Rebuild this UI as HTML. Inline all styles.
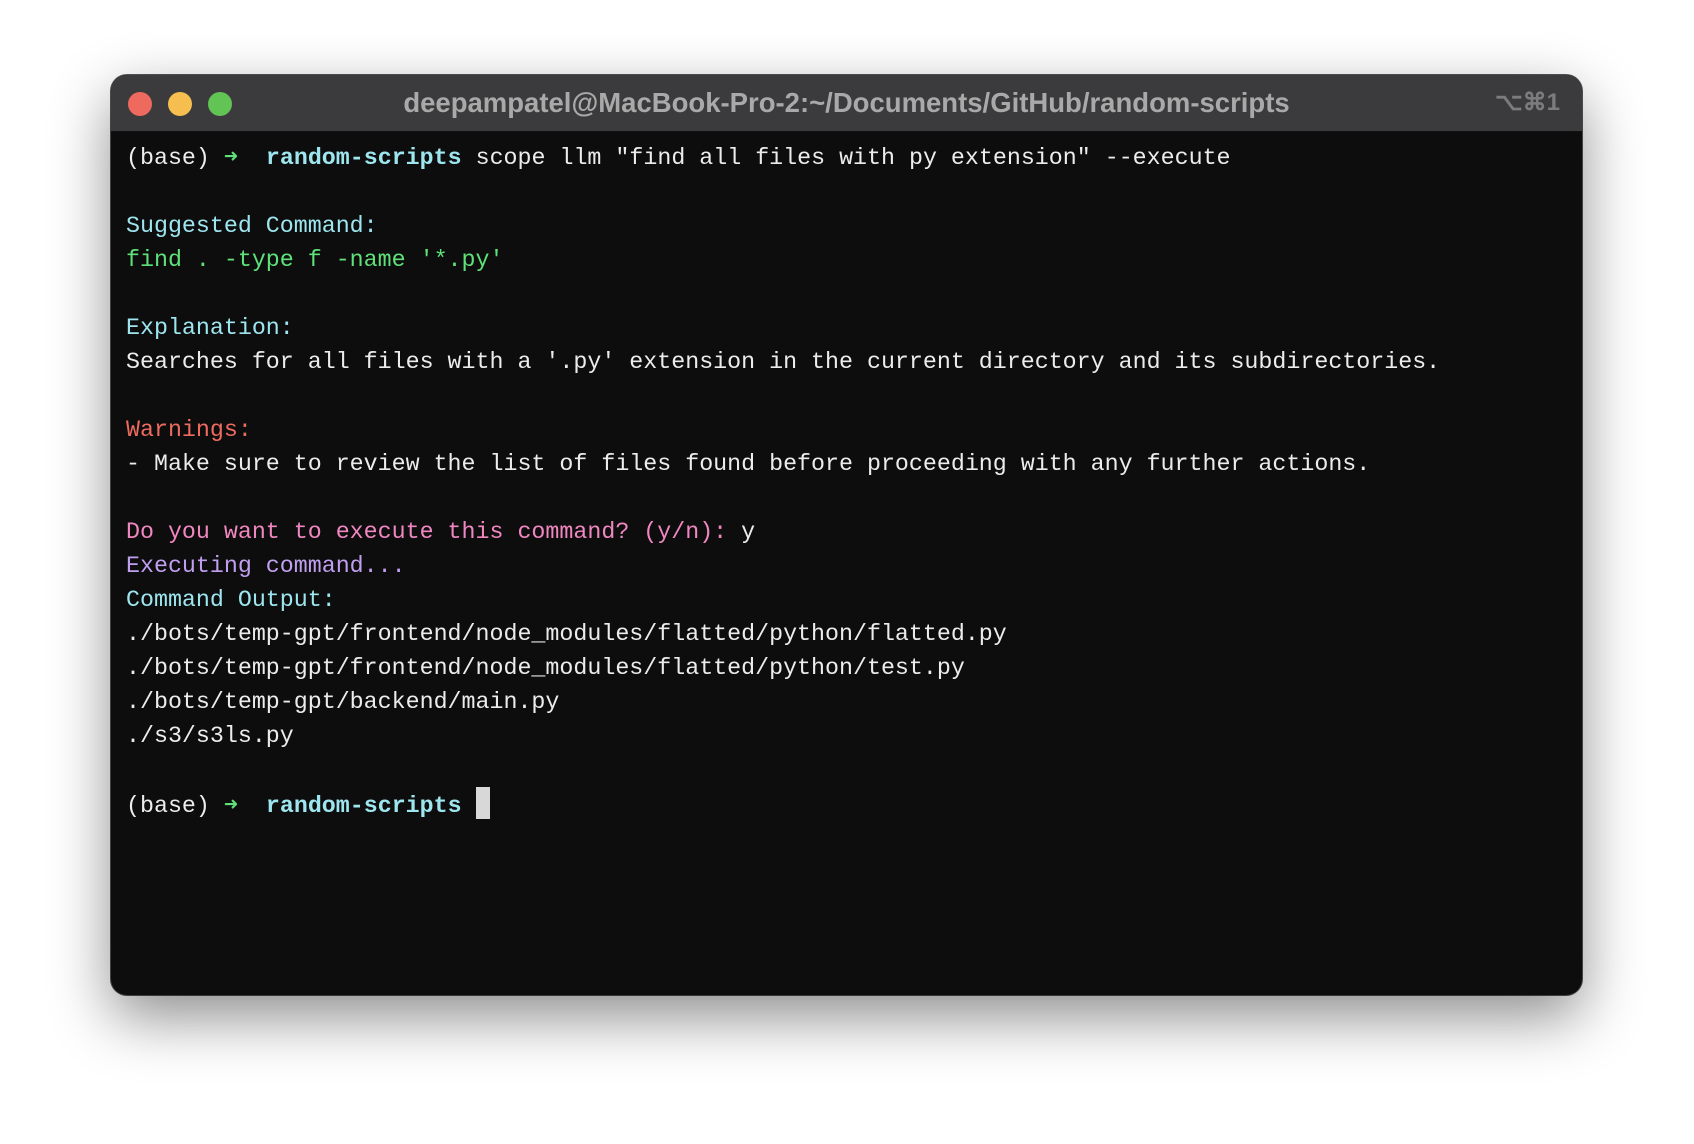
<!DOCTYPE html>
<html><head><style>
html,body{margin:0;padding:0;width:1694px;height:1144px;background:#fff;overflow:hidden}
.win{position:absolute;left:111px;top:75px;width:1471px;height:920px;border-radius:16px;background:#0d0d0d;box-shadow:0 22px 60px rgba(0,0,0,.45),0 0 0 1px #555;overflow:hidden}
.tb{height:56px;background:#3b3a3c;border-bottom:1px solid #111;position:relative;font-family:"Liberation Sans",sans-serif;font-weight:bold;color:#a9a9a9;font-size:27.5px}
.dot{position:absolute;top:17px;width:24px;height:24px;border-radius:50%}
.title{position:absolute;left:0;right:0;top:12px;text-align:center}
.sc{position:absolute;right:22px;top:13px;color:#7c7c7c;font-size:24px}
.term{position:absolute;left:15px;top:66px;font-family:"Liberation Mono",monospace;font-size:23.3px;line-height:34px;color:#ececec;white-space:pre}
.c{color:#9ee6ef}.b{color:#9ee6ef;font-weight:bold}.g{color:#5fe17a}.r{color:#ee6b5f}.p{color:#f087c0}.v{color:#c19ff0}
.cur{display:inline-block;width:14px;height:32px;background:#d8d8d8;vertical-align:-7px}
</style></head><body>
<div class="win">
<div class="tb">
<div class="dot" style="left:17px;background:#ee6a5e"></div>
<div class="dot" style="left:57px;background:#f5be4f"></div>
<div class="dot" style="left:97px;background:#61c454"></div>
<div class="title">deepampatel@MacBook-Pro-2:~/Documents/GitHub/random-scripts</div>
<div class="sc">⌥⌘1</div>
</div>
<div class="term">(base) <span class="g">➜</span>  <span class="b">random-scripts</span> scope llm "find all files with py extension" --execute

<span class="c">Suggested Command:</span>
<span class="g">find . -type f -name '*.py'</span>

<span class="c">Explanation:</span>
Searches for all files with a '.py' extension in the current directory and its subdirectories.

<span class="r">Warnings:</span>
- Make sure to review the list of files found before proceeding with any further actions.

<span class="p">Do you want to execute this command? (y/n):</span> y
<span class="v">Executing command...</span>
<span class="c">Command Output:</span>
./bots/temp-gpt/frontend/node_modules/flatted/python/flatted.py
./bots/temp-gpt/frontend/node_modules/flatted/python/test.py
./bots/temp-gpt/backend/main.py
./s3/s3ls.py

(base) <span class="g">➜</span>  <span class="b">random-scripts</span> <span class="cur"></span></div>
</div>
</body></html>
